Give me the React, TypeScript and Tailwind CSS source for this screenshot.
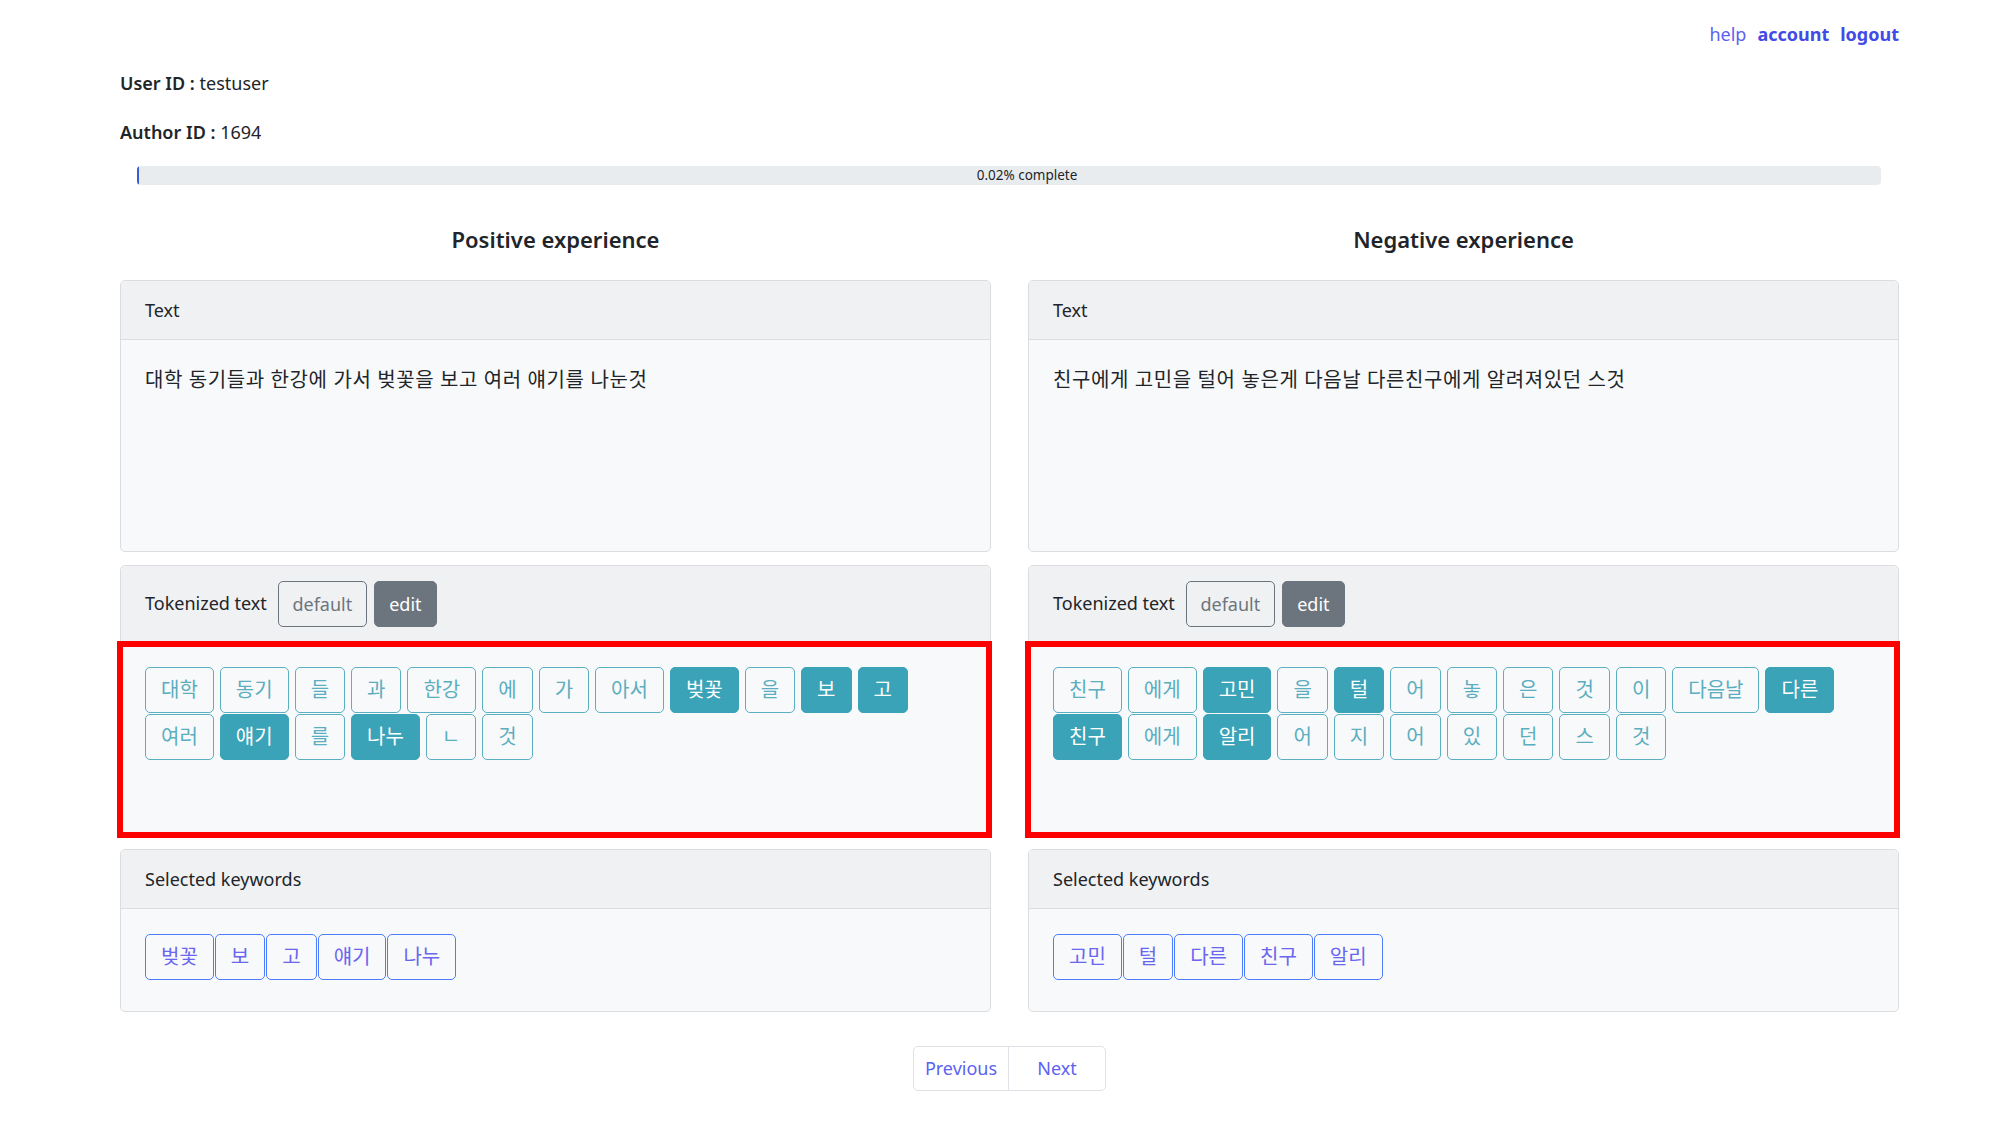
type Token = { t: string; on?: boolean };

const leftTokens: Token[] = [
  { t: '대학' }, { t: '동기' }, { t: '들' }, { t: '과' }, { t: '한강' }, { t: '에' },
  { t: '가' }, { t: '아서' }, { t: '벚꽃', on: true }, { t: '을' }, { t: '보', on: true },
  { t: '고', on: true }, { t: '여러' }, { t: '얘기', on: true }, { t: '를' },
  { t: '나누', on: true }, { t: 'ㄴ' }, { t: '것' },
];

const rightTokens: Token[] = [
  { t: '친구' }, { t: '에게' }, { t: '고민', on: true }, { t: '을' }, { t: '털', on: true },
  { t: '어' }, { t: '놓' }, { t: '은' }, { t: '것' }, { t: '이' }, { t: '다음날' },
  { t: '다른', on: true }, { t: '친구', on: true }, { t: '에게' }, { t: '알리', on: true },
  { t: '어' }, { t: '지' }, { t: '어' }, { t: '있' }, { t: '던' }, { t: '스' }, { t: '것' },
];

function CardHeader({ children }: { children: React.ReactNode }) {
  return (
    <div className="flex h-[59px] items-center border-b border-[#dcdde0] bg-[#f0f1f3] px-6 text-[18px]">
      {children}
    </div>
  );
}

function TokenButton({ token }: { token: Token }) {
  return (
    <button
      className={
        token.on
          ? 'h-[46px] rounded-[5px] border border-[#3aa3b7] bg-[#3aa3b7] px-[15px] text-[20px] text-white'
          : 'h-[46px] rounded-[5px] border border-[#5aafc1] bg-transparent px-[15px] text-[20px] text-[#5aaebf]'
      }
    >
      {token.t}
    </button>
  );
}

function Column({
  title,
  text,
  tokens,
  keywords,
}: {
  title: string;
  text: string;
  tokens: Token[];
  keywords: string[];
}) {
  return (
    <div className="flex flex-col">
      <h2 className="h-[32px] text-center text-[22px] font-semibold leading-[32px] text-[#212529]">{title}</h2>

      {/* Text */}
      <div className="mt-[25px] flex h-[272px] flex-col overflow-hidden rounded-[5px] border border-[#dcdde0] bg-[#f8f9fa]">
        <CardHeader>Text</CardHeader>
        <div className="px-6 pt-[25px] text-[20px] leading-[30px] tracking-[0.6px]">{text}</div>
      </div>

      {/* Tokenized text */}
      <div className="mt-[13px] flex flex-col rounded-[5px] border border-[#dcdde0] bg-[#f8f9fa]">
        <div className="flex h-[76px] items-center gap-[11px] rounded-t-[5px] bg-[#f0f1f3] px-6 text-[18px]">
          <span className="-mt-[2px]">Tokenized text</span>
          <div className="flex gap-[7px]">
            <button className="h-[46px] w-[89px] rounded-[5px] border border-[#6c757d] text-[18px] text-[#6c757d]">
              default
            </button>
            <button className="h-[46px] w-[63px] rounded-[5px] border border-[#6c757d] bg-[#6c757d] text-[18px] text-white">
              edit
            </button>
          </div>
        </div>
        <div className="relative h-[194px] px-6 pt-[25px]">
          <div className="flex flex-wrap gap-x-[6px] gap-y-[1px]">
            {tokens.map((tk, i) => (
              <TokenButton key={i} token={tk} />
            ))}
          </div>
          {/* highlight frame drawn over the token list */}
          <div className="pointer-events-none absolute -top-[1px] -right-[2px] -bottom-[2px] -left-[4px] border-[6px] border-[#ff0000]" />
        </div>
      </div>

      {/* Selected keywords */}
      <div className="mt-[12px] flex h-[163px] flex-col overflow-hidden rounded-[5px] border border-[#dcdde0] bg-[#f8f9fa]">
        <CardHeader>Selected keywords</CardHeader>
        <div className="flex gap-[1px] px-6 pt-[25px]">
          {keywords.map((k) => (
            <button
              key={k}
              className="h-[46px] rounded-[5px] border border-[#4e7cff] px-[15px] text-[20px] text-[#6a66f0]"
            >
              {k}
            </button>
          ))}
        </div>
      </div>
    </div>
  );
}

export default function App() {
  return (
    <div className="min-h-screen bg-white font-['Noto_Sans','Noto_Sans_CJK_KR',sans-serif] text-[#212529]">
      <div className="ml-[120px] w-[1779px] pt-[19px]">
        <nav className="flex h-[30px] items-center justify-end gap-[11px] text-[18px]">
          <a className="text-[#5b62f2]">help</a>
          <a className="font-bold text-[#424be6]">account</a>
          <a className="font-bold text-[#424be6]">logout</a>
        </nav>

        <p className="mt-[19px] text-[18px] leading-[30px]">
          <span className="font-semibold">User ID :</span> testuser
        </p>
        <p className="mt-[19px] text-[18px] leading-[30px]">
          <span className="font-semibold">Author ID :</span> 1694
        </p>

        <div className="relative mt-[19px] ml-[17px] flex h-[19px] w-[1744px] items-center overflow-hidden rounded-[4px] bg-[#e9ecef]">
          <div className="absolute top-0 left-0 h-full w-[2px] bg-[#3b5bdb]" />
          <span className="w-full pl-9 text-center text-[13.5px] leading-[19px]">0.02% complete</span>
        </div>

        <div className="mt-[38px] grid grid-cols-2 gap-x-[37px]">
          <Column
            title="Positive experience"
            text="대학 동기들과 한강에 가서 벚꽃을 보고 여러 얘기를 나눈것"
            tokens={leftTokens}
            keywords={['벚꽃', '보', '고', '얘기', '나누']}
          />
          <Column
            title="Negative experience"
            text="친구에게 고민을 털어 놓은게 다음날 다른친구에게 알려져있던 스것"
            tokens={rightTokens}
            keywords={['고민', '털', '다른', '친구', '알리']}
          />
        </div>

        <div className="mt-[34px] flex justify-center">
          <div className="flex h-[45px] overflow-hidden rounded-[5px] border border-[#dee2e6] text-[18px] text-[#5b62f2]">
            <button className="w-[95px] border-r border-[#dee2e6]">Previous</button>
            <button className="w-[96px]">Next</button>
          </div>
        </div>
      </div>
    </div>
  );
}
